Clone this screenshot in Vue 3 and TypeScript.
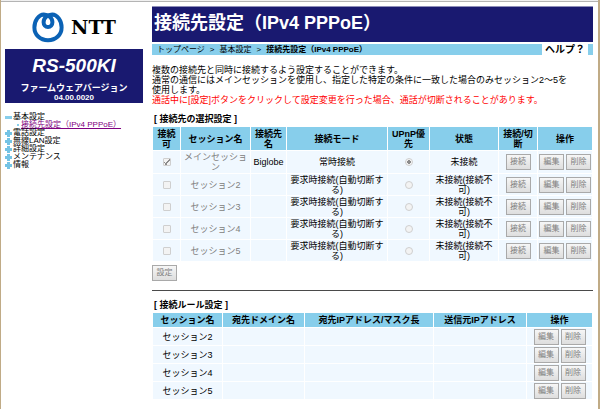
<script setup lang="ts">
interface Session {
  id: number
  name: string
  provider: string
  mode: string
  status: string
  enabled: boolean
}

const auto = '要求時接続(自動切断する)'
const idle = '未接続(接続不可)'

const sessions: Session[] = [
  { id: 1, name: 'メインセッション', provider: 'Biglobe', mode: '常時接続', status: '未接続', enabled: true },
  { id: 2, name: 'セッション2', provider: '', mode: auto, status: idle, enabled: false },
  { id: 3, name: 'セッション3', provider: '', mode: auto, status: idle, enabled: false },
  { id: 4, name: 'セッション4', provider: '', mode: auto, status: idle, enabled: false },
  { id: 5, name: 'セッション5', provider: '', mode: auto, status: idle, enabled: false },
]
const rules = sessions.slice(1)
const menu: string[] = ['電話設定', '無線LAN設定', '詳細設定', 'メンテナンス', '情報']
</script>

<template>
  <div class="page">
    <aside class="side">
      <div class="brand">
        <svg class="logo" viewBox="0 0 32 32" aria-hidden="true">
          <path
            d="M16 29.2C8 29.2 2.4 23.6 2.4 16.4C2.4 9.6 6.8 3.4 11.8 3.4C16.4 3.4 20.4 7 20.4 11.2C20.4 14.2 18.6 16 16 16C13.4 16 11.6 14.2 11.6 11.2C11.6 7 15.6 3.4 20.2 3.4C25.2 3.4 29.6 9.6 29.6 16.4C29.6 23.6 24 29.2 16 29.2Z"
            fill="none" stroke="#0b62b5" stroke-width="4" />
        </svg>
        <span class="ntt">NTT</span>
      </div>
      <div class="device">
        <div class="model">RS-500KI</div>
        <div class="fw">ファームウェアバージョン</div>
        <div class="version">04.00.0020</div>
      </div>
      <nav>
        <ul class="menu">
          <li>
            <a class="entry" href="#basic"><i class="sign minus"></i>基本設定</a>
            <a class="sub" href="#pppoe"><i class="dot"></i><span>接続先設定（IPv4 PPPoE）</span></a>
          </li>
          <li v-for="item in menu" :key="item">
            <a class="entry" href="#menu"><i class="sign"></i>{{ item }}</a>
          </li>
        </ul>
      </nav>
    </aside>

    <main class="main">
      <h1>接続先設定（IPv4 PPPoE）</h1>
      <div class="crumbs">
        <div class="trail">
          <a href="#top">トップページ</a><span>&gt;</span><a href="#basic">基本設定</a><span>&gt;</span><b>接続先設定（IPv4 PPPoE）</b>
        </div>
        <a class="help" href="#help">ヘルプ？</a>
      </div>

      <p class="intro">
        複数の接続先と同時に接続するよう設定することができます。<br>
        通常の通信にはメインセッションを使用し、指定した特定の条件に一致した場合のみセッション2～5を<br>
        使用します。<br>
        <span class="warn">通話中に[設定]ボタンをクリックして設定変更を行った場合、通話が切断されることがあります。</span>
      </p>

      <h2>[ 接続先の選択設定 ]</h2>
      <table class="select">
        <colgroup>
          <col class="w27"><col class="w69"><col class="w35"><col class="w100">
          <col class="w41"><col class="w68"><col class="w38"><col class="w54">
        </colgroup>
        <thead>
          <tr>
            <th>接続可</th><th>セッション名</th><th>接続先名</th><th>接続モード</th>
            <th>UPnP優先</th><th>状態</th><th>接続/切断</th><th>操作</th>
          </tr>
        </thead>
        <tbody>
          <tr v-for="s in sessions" :key="s.id">
            <td><input :id="'on' + s.id" type="checkbox" :checked="s.enabled" disabled></td>
            <td class="dim"><label :for="'on' + s.id">{{ s.name }}</label></td>
            <td>{{ s.provider }}</td>
            <td>{{ s.mode }}</td>
            <td><input type="radio" name="upnp" :aria-label="s.name" :checked="s.enabled" disabled></td>
            <td>{{ s.status }}</td>
            <td><div class="actions"><button type="button" disabled>接続</button></div></td>
            <td>
              <div class="actions">
                <button type="button" disabled>編集</button>
                <button type="button" disabled>削除</button>
              </div>
            </td>
          </tr>
        </tbody>
      </table>
      <button class="apply" type="button" disabled>設定</button>

      <hr>

      <h2>[ 接続ルール設定 ]</h2>
      <table class="rules">
        <colgroup>
          <col class="w69"><col class="w81"><col class="w128"><col class="w92"><col class="w65">
        </colgroup>
        <thead>
          <tr>
            <th>セッション名</th><th>宛先ドメイン名</th><th>宛先IPアドレス/マスク長</th><th>送信元IPアドレス</th><th>操作</th>
          </tr>
        </thead>
        <tbody>
          <tr v-for="r in rules" :key="r.id">
            <td>{{ r.name }}</td>
            <td></td>
            <td></td>
            <td></td>
            <td>
              <div class="actions">
                <button type="button" disabled>編集</button>
                <button type="button" disabled>削除</button>
              </div>
            </td>
          </tr>
        </tbody>
      </table>
    </main>
  </div>
</template>

<style>
body {
  background: #fff;
}
</style>

<style scoped>
.page {
  box-sizing: border-box;
  min-height: 100vh;
  display: grid;
  grid-template-columns: 138px minmax(0, 1fr);
  column-gap: 9px;
  padding: 0 5px 0 4px;
  border-left: 1px solid #c0ab86;
  border-right: 2px solid #c0ab86;
  background: linear-gradient(#f0f0f0 1px, #b4b4b4 1px, #b4b4b4 2px, #fff 2px);
  font: 9px/10px "Liberation Sans", "Noto Sans CJK JP", sans-serif;
  color: #000;
}
a {
  color: inherit;
  text-decoration: none;
}
.brand {
  display: flex;
  align-items: center;
  justify-content: center;
  gap: 7px;
  height: 38px;
  padding-top: 8px;
  padding-bottom: 3px;
}
.logo {
  width: 32px;
  height: 32px;
}
.ntt {
  font: bold 19px/24px "DejaVu Serif", serif;
}
.device {
  padding: 7px 0 1px;
  background: #191970;
  color: #fff;
  text-align: center;
  font-weight: bold;
}
.model {
  font-size: 19px;
  font-style: italic;
  line-height: 19px;
}
.fw {
  margin-top: 8px;
}
.version {
  font-size: 8px;
  line-height: 9px;
}
.menu {
  margin: 10px 0 0;
  padding: 0;
  list-style: none;
  font-size: 8px;
  line-height: 8px;
}
.entry {
  display: flex;
  align-items: center;
  gap: 1px;
}
.sign {
  width: 7px;
  height: 7px;
  background:
    linear-gradient(#74c3e4, #74c3e4) center / 7px 3px no-repeat,
    linear-gradient(#74c3e4, #74c3e4) center / 3px 7px no-repeat;
}
.minus {
  background: linear-gradient(#87ceeb, #87ceeb) center / 7px 3px no-repeat;
}
.sub {
  display: flex;
  align-items: center;
  gap: 2px;
  padding-left: 12px;
  color: #800080;
  white-space: nowrap;
}
.sub span {
  text-decoration: underline;
}
.dot {
  width: 2px;
  height: 2px;
  background: #87ceeb;
}
.main {
  padding-top: 6px;
}
h1 {
  margin: 0;
  padding: 5px 2px 7px;
  border-top: 1px solid #8d8db8;
  background: #191970;
  color: #fff;
  font-size: 18px;
  font-weight: bold;
  line-height: 23px;
}
.crumbs {
  display: flex;
  justify-content: space-between;
  margin-top: 2px;
  padding: 0 5px;
  background: #87ceeb;
  font-size: 8px;
  line-height: 11px;
}
.trail {
  display: flex;
  gap: 5px;
}
.help {
  padding: 0 3px;
  background: #fff;
  font-size: 10px;
  font-weight: bold;
}
.intro {
  margin: 10px 0 0;
  white-space: nowrap;
}
.warn {
  color: #f00;
}
h2 {
  margin: 9px 0 2px;
  padding-left: 2px;
  font-size: 9px;
  line-height: 10px;
}
table {
  width: 100%;
  table-layout: fixed;
  border-collapse: separate;
  border-spacing: 1px;
  text-align: center;
}
th,
td {
  padding: 0;
  vertical-align: middle;
}
th {
  background: #87ceeb;
}
td {
  background: #f0f8ff;
}
.select thead tr {
  height: 23px;
}
.select th:first-child {
  padding: 0 1px;
}
.select tbody tr {
  height: 21px;
}
.select tbody tr:first-child {
  height: 22px;
}
.rules thead tr {
  height: 14px;
}
.rules tbody tr {
  height: 17px;
}
.dim {
  color: #808080;
}
.w27 { width: 27px; }
.w35 { width: 35px; }
.w38 { width: 38px; }
.w41 { width: 41px; }
.w54 { width: 54px; }
.w65 { width: 65px; }
.w68 { width: 68px; }
.w69 { width: 69px; }
.w81 { width: 81px; }
.w92 { width: 92px; }
.w100 { width: 100px; }
.w128 { width: 128px; }
.actions {
  display: flex;
  justify-content: center;
  gap: 2px;
}
button {
  box-sizing: border-box;
  display: block;
  width: 25px;
  height: 16px;
  margin: 0;
  padding: 0;
  border: 1px solid #a9a9a9;
  border-radius: 0;
  background: linear-gradient(#f6f6f6, #dedede);
  color: #808080;
  font: 8px/12px "Liberation Sans", "Noto Sans CJK JP", sans-serif;
}
.apply {
  margin-top: 3px;
}
input {
  appearance: none;
  box-sizing: border-box;
  display: block;
  width: 8px;
  height: 8px;
  margin: 0 auto;
  border: 1px solid #cfcfcf;
  border-radius: 1px;
  background: #f3f3f3;
}
input[type='radio'] {
  border-radius: 50%;
}
input[type='radio']:checked {
  background: radial-gradient(circle, #8c8c8c 2px, #f3f3f3 2px);
}
input[type='checkbox']:checked {
  background:
    linear-gradient(135deg, transparent 45%, #8c8c8c 45%, #8c8c8c 62%, transparent 62%) right / 5px 6px no-repeat,
    linear-gradient(45deg, transparent 40%, #8c8c8c 40%, #8c8c8c 65%, transparent 65%) left bottom / 3px 3px no-repeat,
    #f3f3f3;
}
hr {
  height: 1px;
  margin: 9px 0 0;
  border: 0;
  background: #4a4a4a;
}
</style>
